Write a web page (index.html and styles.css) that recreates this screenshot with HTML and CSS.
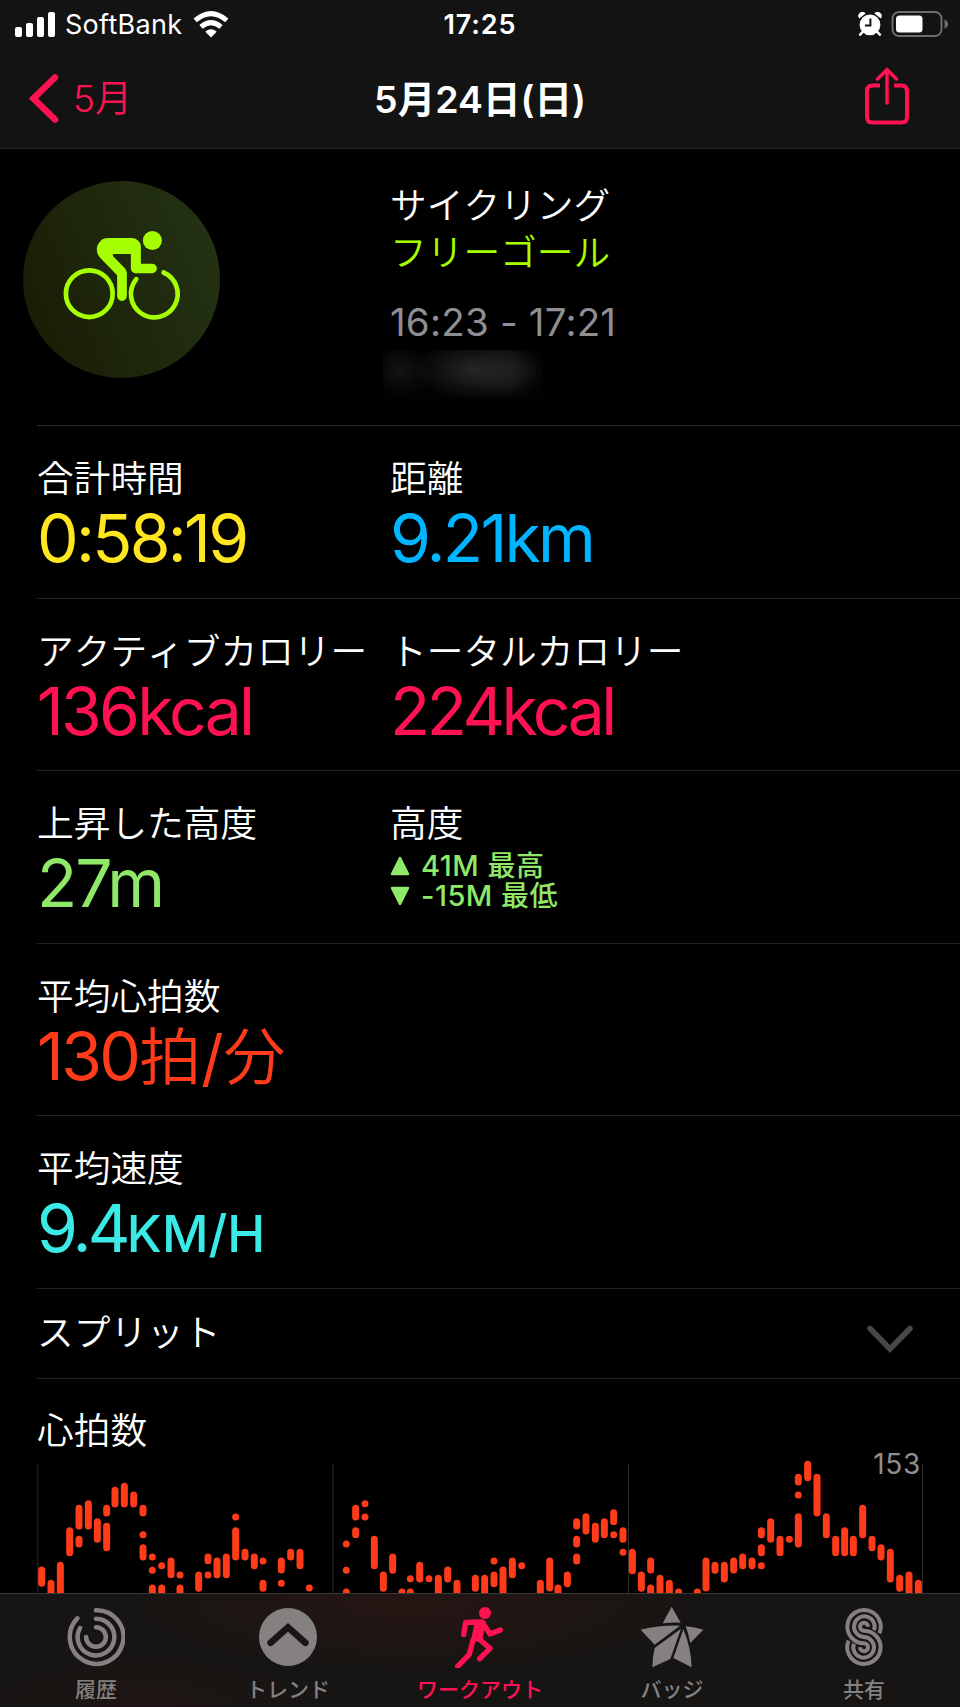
FILE: index.html
```html
<!DOCTYPE html>
<html lang="ja">

<head>
    <meta charset="utf-8">
    <title>5月24日(日)</title>
    <link rel="stylesheet" href="styles.css">
</head>

<body>
    <div class="phone">
        <header class="header">
            <div class="status">
                <div class="carrier">
                    <svg width="40" height="25" viewBox="0 0 40 25">
                        <rect x="0" y="15" width="7" height="10" rx="2" />
                        <rect x="11" y="11" width="7" height="14" rx="2" />
                        <rect x="22" y="5" width="7" height="20" rx="2" />
                        <rect x="33" y="0" width="7" height="25" rx="2" />
                    </svg>
                    <span class="carrier-name">SoftBank</span>
                    <svg width="36" height="27" viewBox="0 0 36 27">
                        <path d="M18 26.500L12.300 20.700Q18 16 23.700 20.700Z" />
                        <path class="wave" d="M8 15.800Q18 7.400 28 15.800M2.200 9.400Q18 -4.200 33.800 9.400" />
                    </svg>
                </div>
                <div class="clock">17:25</div>
                <div class="battery">
                    <svg width="24" height="24" viewBox="0 0 24 24">
                        <circle cx="12" cy="12.800" r="10.400" />
                        <path d="M1.200 6.500A4 4 0 0 1 7.600 1.600ZM22.800 6.500A4 4 0 0 0 16.400 1.600Z" />
                        <path class="alarm-leg" d="M4.500 20L2.200 22.600M19.500 20L21.800 22.600" />
                        <path class="alarm-hand" d="M12.400 6.500V13.400H7" />
                    </svg>
                    <svg width="58" height="28" viewBox="0 0 58 28">
                        <rect class="cell" x="1.500" y="2" width="49" height="24" rx="6.500" />
                        <rect x="5" y="5.500" width="26.500" height="17" rx="3.500" />
                        <path class="cap" d="M53.500 9.500Q57 10.500 57 14T53.500 18.500Z" />
                    </svg>
                </div>
            </div>
            <div class="nav">
                <div class="back">
                    <svg width="30" height="50" viewBox="0 0 30 50">
                        <path d="M26 4.500L4.500 25.500L26 46.500" />
                    </svg>
                    <span>5月</span>
                </div>
                <div class="title">5月24日(日)</div>
                <div class="share">
                    <svg width="46" height="58" viewBox="0 0 46 58">
                        <path d="M16 18.500H8.500Q3 18.500 3 24V50Q3 55.500 8.500 55.500H37.500Q43 55.500 43 50V24Q43 18.500 37.500 18.500H30" />
                        <path class="arrow" d="M23 36V3.500M13.500 12L23 2.800L32.500 12" />
                    </svg>
                </div>
            </div>
        </header>

        <main class="content">
            <section class="summary">
                <svg class="activity" width="197" height="197" viewBox="70 63 590 590">
                    <defs>
                        <linearGradient id="disc" x1="0" y1="0.700" x2="1" y2="0.300">
                            <stop offset="0" stop-color="#191d05" />
                            <stop offset="1" stop-color="#243214" />
                        </linearGradient>
                    </defs>
                    <circle cx="365" cy="358" r="295" fill="url(#disc)" />
                    <circle class="wheel" cx="268.500" cy="400.500" r="70" />
                    <path class="wheel" d="M491 337A70 70 0 1 1 409 357" />
                    <circle class="rider" cx="457.500" cy="241" r="28.500" />
                    <path class="rider" d="M325 234H397A26 26 0 0 1 423 260V311H457A14 14 0 0 1 457 339H407A14 14 0 0 1 393 325V282H343Q337 282 340 288L375 324Q381 330 381 338V408A14.500 14.500 0 0 1 352 408V345L303 295Q291 283 291 268A34 34 0 0 1 325 234Z" />
                </svg>
                <div class="info">
                    <div class="label">サイクリング</div>
                    <div class="label goal">フリーゴール</div>
                    <div class="time">16:23 - 17:21</div>
                    <div class="place"></div>
                </div>
            </section>

            <section class="row">
                <div>
                    <div class="label">合計時間</div>
                    <div class="value duration">0:58:19</div>
                </div>
                <div>
                    <div class="label">距離</div>
                    <div class="value distance">9.21km</div>
                </div>
            </section>
            <section class="row">
                <div>
                    <div class="label">アクティブカロリー</div>
                    <div class="value energy">136kcal</div>
                </div>
                <div>
                    <div class="label">トータルカロリー</div>
                    <div class="value energy total">224kcal</div>
                </div>
            </section>
            <section class="row">
                <div>
                    <div class="label">上昇した高度</div>
                    <div class="value climb">27m</div>
                </div>
                <div>
                    <div class="label">高度</div>
                    <div class="altitude">
                        <svg width="20" height="20" viewBox="0 0 20 20">
                            <path d="M10 2L18 18H2Z" />
                        </svg>
                        <span>41M <b>最高</b></span>
                    </div>
                    <div class="altitude">
                        <svg width="20" height="20" viewBox="0 0 20 20">
                            <path d="M10 18L2 2H18Z" />
                        </svg>
                        <span>-15M <b>最低</b></span>
                    </div>
                </div>
            </section>
            <section class="row">
                <div>
                    <div class="label">平均心拍数</div>
                    <div class="value pulse">130<span class="unit">拍<i>/</i>分</span></div>
                </div>
            </section>
            <section class="row">
                <div>
                    <div class="label">平均速度</div>
                    <div class="value speed">9.4<span class="unit">KM/H</span></div>
                </div>
            </section>
            <section class="row split">
                <div class="label">スプリット</div>
                <svg width="48" height="32" viewBox="0 0 48 32">
                    <path d="M4 4.500L24 25L44 4.500" />
                </svg>
            </section>

            <section class="heart">
                <div class="label">心拍数</div>
                <span class="max">153</span>
                <svg class="chart" width="960" height="139" viewBox="0 42 2880 417">
                    <path class="grid" d="M113.500 72V480M999.500 72V480M1885.500 72V480M2767.500 72V480" />
                    <!-- first quarter -->
                    <path class="bars" d="M125 390V430M153 430V480M181 376V480M209 272V338M237 205V258M237 298V312M265 191V258M292 245V298M320 205V219M320 259V323M345 151V192M373 139V192M401 165V192M429 205V219M429 284h0M429 323V351M457 351h0M457 391h0M457 444V480M485 377h0M485 444V480M513 363V404M540 405h0M540 444V480M596 405V445M624 351V362M624 405h0M651 363V404M679 351V404M707 231h0M707 272V351M735 337V351M763 351V377M789 363h0M789 430V445M844 363V390M844 430h0M872 337V351M900 337V377M928 444h0" />
                    <!-- second quarter -->
                    <path class="bars" d="M1039 312h0M1039 391h0M1039 456V480M1067 205V231M1067 272V284M1095 191h0M1095 231h0M1123 298V377M1150 405V445M1178 351V391M1206 456V480M1231 416h0M1231 456V480M1259 376V417M1287 416h0M1315 415V480M1343 390V417M1371 430V480M1426 415V445M1454 415V480M1482 363h0M1482 405V431M1509 390V480M1537 363V404M1565 377h0M1621 430V480M1649 363V444M1674 444V480M1702 405V431M1730 245V258M1730 298V312M1730 351V363M1758 230V273M1786 259V298M1813 245V284M1841 218V245M1841 284h0M1869 272V298M1869 337h0" />
                    <!-- second half -->
                    <path class="bars" d="M1897 337V392M1924 405V445M1952 363V390M1952 444V480M1980 415V480M2008 430V480M2036 456V480M2092 456V480M2118 363V444M2145 376V391M2173 376V417M2201 363V390M2228 351V377M2256 363V377M2284 272V284M2284 323V338M2284 377h0M2312 245V298M2340 298V338M2368 298h0M2395 112V126M2395 165h0M2395 230V312M2423 73V113M2451 112V219M2479 230V284M2507 298V338M2534 272V338M2560 298V338M2588 205V284M2616 298V323M2643 323V351M2671 337V417M2699 415V445M2727 405V480M2755 430V480" />
                </svg>
            </section>
        </main>

        <nav class="tabs">
            <div class="tab">
                <svg width="58" height="58" viewBox="200 69 174 174">
                    <path class="ring" d="M287 75.500A80.500 80.500 0 1 1 231 100M287 101A55 55 0 1 1 239 129M287 126.500A29.500 29.500 0 1 1 257.500 156" />
                </svg>
                <span>履歴</span>
            </div>
            <div class="tab">
                <svg width="58" height="58" viewBox="779 69 174 174">
                    <circle cx="866" cy="156" r="87" />
                    <path class="trend" d="M814 173L866 127L918 173" />
                </svg>
                <span>トレンド</span>
            </div>
            <div class="tab active">
                <svg width="58" height="62" viewBox="1353 60 174 186">
                    <circle cx="1455" cy="81" r="18" />
                    <path d="M1426 102L1458 106L1447 162L1411 170Z" />
                    <path class="limb" d="M1391 146L1397 109L1446 108L1470 144L1501 132M1438 160L1470 187L1439 218M1419 162L1408 205L1373 241" />
                </svg>
                <span>ワークアウト</span>
            </div>
            <div class="tab">
                <svg width="64" height="62" viewBox="477 67 192 186">
                    <path d="M572 69L599 117Q572 116 545 119Z" />
                    <path d="M479 138Q540 124 597 126L521 183Z" />
                    <path d="M600 135L568 226L514 251Q514 220 521 193Z" />
                    <path d="M607 137Q630 190 632 251L577 223Z" />
                    <path d="M614 128Q642 130 667 138L628 178Q623 152 614 128Z" />
                </svg>
                <span>バッジ</span>
            </div>
            <div class="tab">
                <svg width="58" height="60" viewBox="1063 67 174 180">
                    <path class="strand" d="M1196 146A50 50 0 1 0 1150 176A12 12 0 1 1 1138 188M1180 137A31 31 0 1 0 1150 157A31 31 0 1 1 1120 177M1162 126A12 12 0 1 0 1150 138A50 50 0 1 1 1104 168" />
                </svg>
                <span>共有</span>
            </div>
        </nav>
    </div>
</body>

</html>
```
FILE: styles.css
```css
html,
body {
    margin: 0;
    background-color: #000;
}

.phone {
    width: 960px;
    height: 1707px;
    overflow: hidden;
    display: flex;
    flex-direction: column;
    background-color: #000;
    color: #fff;
    font-family: Inter, "Noto Sans CJK JP", sans-serif;
}

svg {
    display: block;
    flex: none;
    fill: currentColor;
}

/* header */
.header {
    height: 148px;
    flex: none;
    background-color: #131313;
    border-bottom: 1px solid #222;
}

.status {
    display: grid;
    grid-template-columns: 1fr auto 1fr;
    align-items: center;
    height: 48px;
    padding: 0 11px 0 15px;
    font-size: 27px;
    line-height: 48px;
}

.carrier {
    display: flex;
    align-items: center;
}

.carrier-name {
    margin: 0 11px 0 10px;
    letter-spacing: 0.300px;
    padding-top: 1px;
}

.wave {
    fill: none;
    stroke: #fff;
    stroke-width: 5;
}

.clock {
    margin-left: -4px;
    font-weight: 600;
    letter-spacing: 0.900px;
    padding-top: 1px;
}

.battery {
    display: flex;
    align-items: center;
    justify-content: flex-end;
    gap: 9px;
    margin-top: -2px;
}

.alarm-leg {
    stroke: #fff;
    stroke-width: 2.500;
    stroke-linecap: round;
}

.alarm-hand {
    fill: none;
    stroke: #131313;
    stroke-width: 2;
}

.cell {
    fill: none;
    stroke: #6d6d6d;
    stroke-width: 2;
}

.cap {
    fill: #6d6d6d;
}

.nav {
    display: grid;
    grid-template-columns: 1fr auto 1fr;
    align-items: center;
    height: 100px;
    padding: 0 50px 0 29px;
    font-size: 37px;
}

.back {
    display: flex;
    align-items: center;
    gap: 14px;
    color: #ff1152;
    font-weight: 350;
}

.back span {
    margin-top: -4px;
}

.back path {
    fill: none;
    stroke: #ff1152;
    stroke-width: 6.500;
    stroke-linecap: round;
}

.title {
    margin: -4px 0 0 21px;
    font-size: 37.500px;
    font-weight: 600;
}

.share {
    display: flex;
    justify-content: flex-end;
    margin-top: -4px;
}

.share path {
    fill: none;
    stroke: #ff1152;
    stroke-width: 4;
    stroke-linecap: butt;
}

.share .arrow {
    stroke-width: 3.500;
    stroke-linecap: round;
}

/* workout */
.content {
    flex: none;
    height: 1444px;
    overflow: hidden;
}

.label {
    font-family: "Noto Sans CJK JP", sans-serif;
    font-size: 36.700px;
    font-weight: 350;
    font-kerning: none;
    line-height: 44px;
    white-space: nowrap;
}

.summary {
    display: grid;
    grid-template-columns: 353px 1fr;
    height: 276px;
    margin-left: 37px;
    border-bottom: 1px solid #2b2b2b;
}

.activity {
    margin: 32px 0 0 -14px;
}

.wheel {
    fill: none;
    stroke: #a5ff00;
    stroke-width: 14;
    stroke-linecap: round;
}

.rider {
    fill: #a5ff00;
}

.info {
    padding-top: 32px;
}

.goal {
    margin-top: 3px;
    color: #a5ff00;
}

.time {
    margin-top: 26px;
    color: #8e8e93;
    font-size: 38.500px;
    line-height: 48px;
    letter-spacing: 0.200px;
}

.place {
    width: 160px;
    height: 49px;
    margin: 4px 0 0 -7px;
    background:
        radial-gradient(ellipse 30px 26px at 18px 21px, #131313, transparent),
        radial-gradient(ellipse 62px 30px at 92px 20px, #262628, transparent),
        radial-gradient(ellipse 40px 30px at 124px 21px, #1c1c1e, transparent),
        #020202;
}

.row {
    box-sizing: border-box;
    display: grid;
    grid-template-columns: 353px 1fr;
    height: 172.500px;
    margin-left: 37px;
    padding-top: 28px;
    border-bottom: 1px solid #222;
}

.value {
    margin-top: 7px;
    font-size: 66px;
    line-height: 66px;
    letter-spacing: -2.700px;
    white-space: nowrap;
}

.duration {
    color: #ffe620;
}

.distance {
    color: #00b4ff;
}

.energy {
    color: #ff1152;
    letter-spacing: -2.800px;
}

.total {
    letter-spacing: -3.500px;
}

.climb {
    color: #8fe868;
    letter-spacing: -2px;
}

.pulse {
    color: #ff3b1a;
}

.speed {
    color: #3beae6;
    letter-spacing: -3.700px;
}

.pulse .unit {
    margin-left: 1px;
    font-size: 62px;
    font-weight: 350;
    letter-spacing: 0;
}

.pulse i {
    font-style: normal;
    font-weight: 400;
}

.speed .unit {
    font-size: 51px;
    font-weight: 500;
    letter-spacing: 0;
}

.altitude {
    display: flex;
    align-items: center;
    gap: 11px;
    color: #8fe868;
    font-size: 29px;
    font-weight: 450;
    line-height: 30px;
    letter-spacing: 0.500px;
}

.altitude path {
    stroke: #8fe868;
    stroke-width: 2.500;
    stroke-linejoin: round;
}

.label + .altitude {
    margin-top: 8px;
}

.altitude b {
    font-size: 28px;
    font-weight: 500;
}

.split {
    grid-template-columns: 1fr auto;
    height: 90px;
    padding: 19px 46px 0 0;
}

.split svg {
    margin-top: 16px;
}

.split path {
    fill: none;
    stroke: #48484a;
    stroke-width: 5.500;
    stroke-linecap: round;
}

/* heart rate */
.heart {
    position: relative;
}

.heart .label {
    height: 48.500px;
    padding: 27px 0 0 37px;
}

.max {
    position: absolute;
    top: 68px;
    right: 39px;
    color: #8e8e93;
    font-size: 28px;
    line-height: 34px;
    letter-spacing: 0.700px;
}

.grid {
    stroke: #2c2c2c;
    stroke-width: 3;
}

.bars {
    stroke: #ff3b1a;
    stroke-width: 21;
    stroke-linecap: round;
}

/* tab bar */
.tabs {
    flex: 1;
    display: grid;
    grid-template-columns: repeat(5, 1fr);
    border-top: 1px solid #3b3837;
    background:
        radial-gradient(ellipse 300px 70px at 410px 10px, rgba(60, 22, 16, 0.400), transparent),
        radial-gradient(ellipse 180px 60px at 150px 114px, rgba(50, 22, 18, 0.300), transparent),
        #161514;
}

.tab {
    display: flex;
    flex-direction: column;
    align-items: center;
    color: #858181;
    font-size: 21px;
    font-weight: 500;
}

.tab svg {
    height: 62px;
    margin-top: 12px;
}

.tab span {
    margin-top: 7px;
    line-height: 30px;
}

.active {
    color: #ff1152;
}

.ring,
.strand,
.limb {
    fill: none;
    stroke: currentColor;
    stroke-width: 13.500;
    stroke-linecap: round;
}

.limb {
    stroke-width: 16;
    stroke-linejoin: round;
}

.strand {
    stroke-width: 12;
    stroke-linecap: butt;
}

.trend {
    fill: none;
    stroke: #1a1615;
    stroke-width: 20;
    stroke-linecap: round;
}
```
